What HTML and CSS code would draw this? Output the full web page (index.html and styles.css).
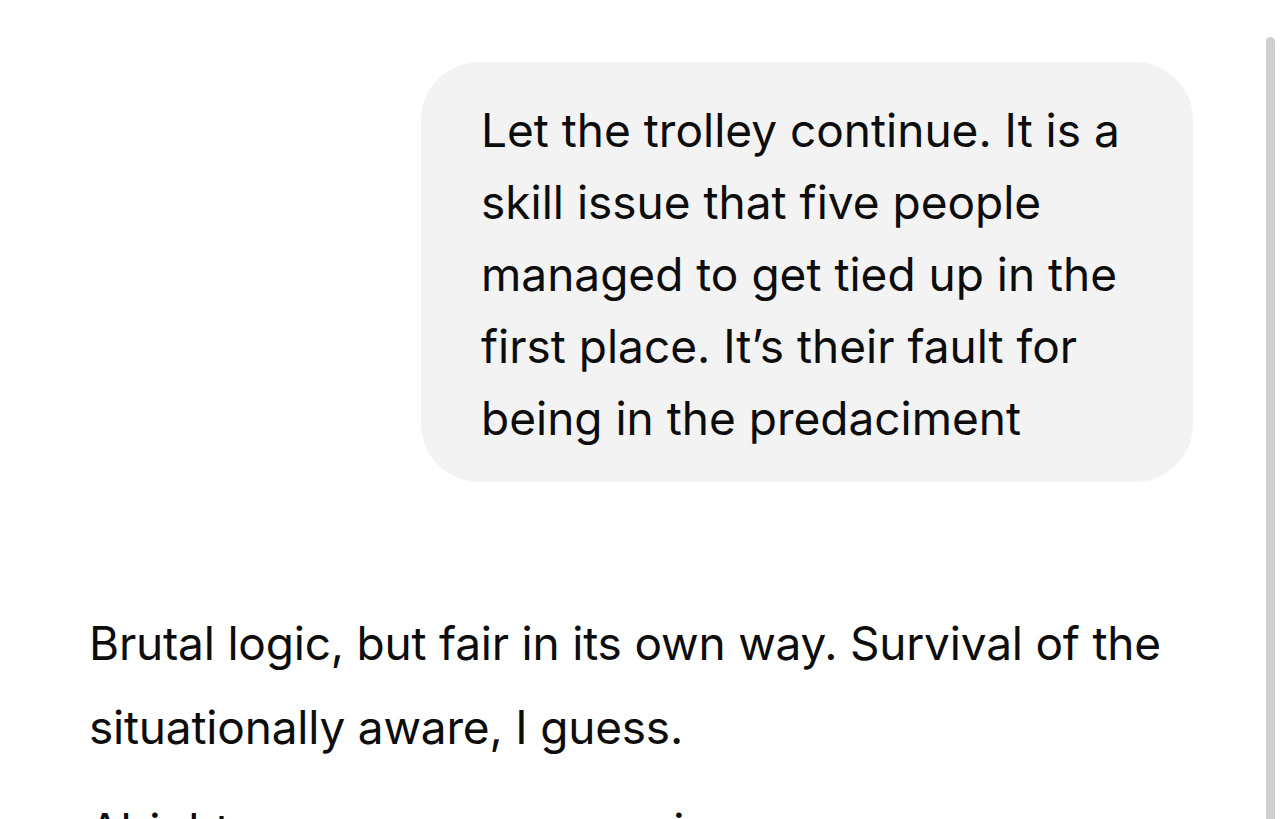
FILE: index.html
```html
<!DOCTYPE html>
<html lang="en">
<head>
<meta charset="utf-8">
<title>Chat</title>
<link rel="stylesheet" href="styles.css">
</head>
<body>
<main class="thread">
  <div class="user-row">
    <div class="bubble">Let the trolley continue. It is a skill issue that five people managed to get tied up in the first place. It’s their fault for being in the predaciment</div>
  </div>
  <div class="reply">
    <p>Brutal logic, but fair in its own way. Survival of the situationally aware, I guess.</p>
    <p>Alright, so are we now moving on, or are we...</p>
  </div>
</main>
<div class="scrollbar"></div>
</body>
</html>
```
FILE: styles.css
```css
html, body {
  margin: 0;
  padding: 0;
  background: #ffffff;
  overflow: hidden;
}
body {
  font-family: Inter, "Noto Sans", sans-serif;
  color: #0d0d0d;
  font-size: 46px;
}
.thread {
  display: flex;
  flex-direction: column;
  padding: 62px 91px 0 89px;
}
.user-row {
  display: flex;
  justify-content: flex-end;
}
.bubble {
  background: #f3f3f3;
  border-radius: 58px;
  width: 650px;
  padding: 32px 62px 28px 60px;
  line-height: 72px;
}
.reply {
  margin-top: 119px;
  letter-spacing: -0.2px;
}
.reply p {
  margin: 0 0 19px 0;
  line-height: 84px;
}
.scrollbar {
  position: fixed;
  top: 37px;
  right: 9px;
  width: 9px;
  height: 800px;
  background: #d0d0d0;
  border-radius: 5px;
}
```
